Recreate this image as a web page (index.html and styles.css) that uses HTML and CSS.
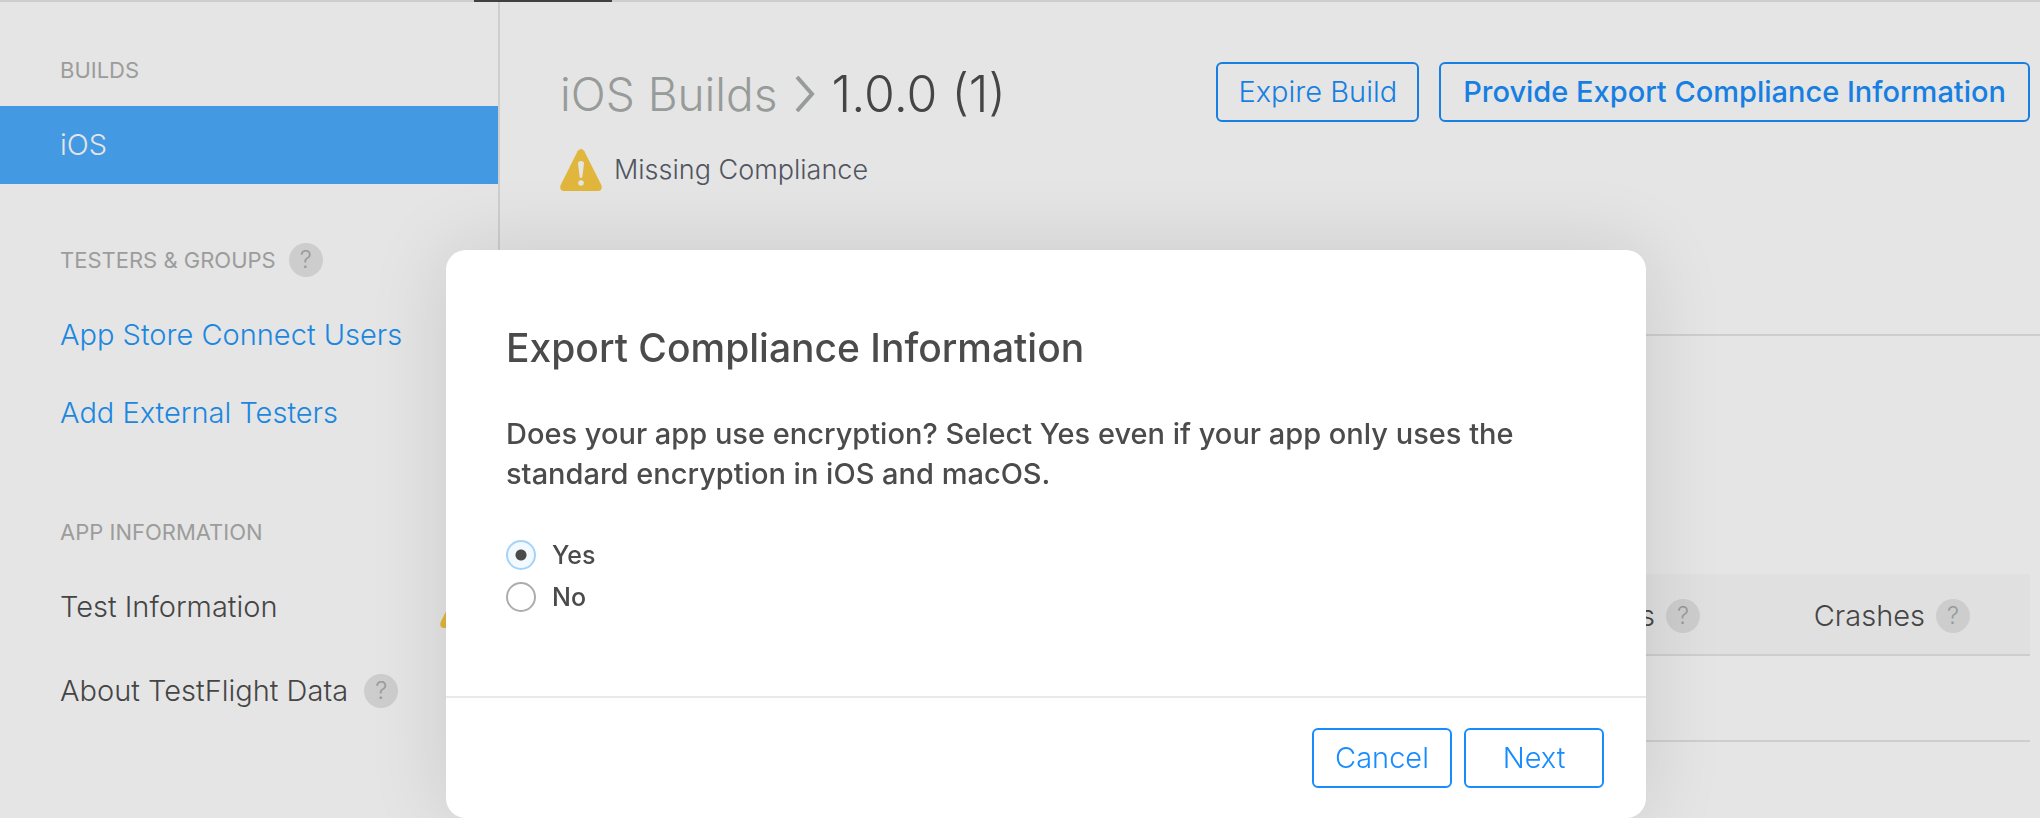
FILE: index.html
```html
<!DOCTYPE html>
<html lang="en">
<head>
<meta charset="utf-8">
<meta name="viewport" content="width=device-width, initial-scale=1">
<title>TestFlight</title>
<link rel="stylesheet" href="styles.css">
</head>
<body>
<svg class="defs" aria-hidden="true">
  <symbol id="warning" viewBox="0 0 42 42">
    <path fill="#e1b63c" d="M17.6 2.2Q21-2 24.4 2.2L41.3 36Q43 41.500 38 42H4Q-1 41.500.7 36Z"/>
    <path fill="#e5e5e5" d="M18 14.500Q18 12 21 12T24 14.500L22.300 28Q21 30 19.700 28Z"/>
    <circle cx="21" cy="34" r="2.800" fill="#e5e5e5"/>
  </symbol>
</svg>
<div class="page">
  <div class="tabs"><span class="tab-marker"></span></div>
  <div class="columns">
    <nav class="sidebar">
      <section class="group">
        <h2 class="group-title">BUILDS</h2>
        <a class="nav-item selected" href="#">iOS</a>
      </section>
      <section class="group">
        <h2 class="group-title">TESTERS &amp; GROUPS <button class="help" type="button">?</button></h2>
        <a class="nav-item link" href="#">App Store Connect Users</a>
        <a class="nav-item link" href="#">Add External Testers</a>
      </section>
      <section class="group app-info">
        <h2 class="group-title">APP INFORMATION</h2>
        <a class="nav-item" href="#">Test Information <svg class="warning"><use href="#warning"/></svg></a>
        <div class="nav-item about">About TestFlight Data <button class="help" type="button">?</button></div>
      </section>
    </nav>
    <main class="main">
      <header class="header">
        <div>
          <h1 class="title">
            <a class="crumb" href="#">iOS Builds</a>
            <svg class="chevron" viewBox="0 0 20 36"><path d="M2 1L17 18L2 35" fill="none" stroke="#979b99" stroke-width="4"/></svg>
            <span>1.0.0 (1)</span>
          </h1>
          <p class="status"><svg class="warning"><use href="#warning"/></svg>Missing Compliance</p>
        </div>
        <div class="actions">
          <button class="button" type="button">Expire Build</button>
          <button class="button strong" type="button">Provide Export Compliance Information</button>
        </div>
      </header>
      <div class="content">
        <table class="builds">
          <colgroup><col><col class="metric"><col class="metric"></colgroup>
          <thead>
            <tr>
              <td></td>
              <th scope="col"><span class="metric-label">Sessions <button class="help" type="button">?</button></span></th>
              <th scope="col"><span class="metric-label">Crashes <button class="help" type="button">?</button></span></th>
            </tr>
          </thead>
          <tbody><tr><td></td><td></td><td></td></tr></tbody>
        </table>
      </div>
    </main>
  </div>
</div>
<div class="overlay">
  <form class="modal" role="dialog" aria-labelledby="modal-title">
    <div class="modal-body">
      <h2 class="modal-title" id="modal-title">Export Compliance Information</h2>
      <fieldset class="question">
        <legend class="question-text">Does your app use encryption? Select Yes even if your app only uses the standard encryption in iOS and macOS.</legend>
        <label class="option"><input class="radio" type="radio" name="encryption" checked>Yes</label>
        <label class="option"><input class="radio" type="radio" name="encryption">No</label>
      </fieldset>
    </div>
    <footer class="modal-footer">
      <button class="button bright" type="button">Cancel</button>
      <button class="button bright" type="button">Next</button>
    </footer>
  </form>
</div>
</body>
</html>
```
FILE: styles.css
```css
* { box-sizing: border-box; }

body {
  margin: 0;
  overflow: hidden;
  background: #e5e5e5;
  color: #454545;
  font: 300 29px/36px Inter, "Liberation Sans", sans-serif;
}

h1, h2, p, fieldset { margin: 0; padding: 0; border: 0; font-weight: inherit; }
a { color: inherit; text-decoration: none; }
button { font: inherit; cursor: pointer; }
.defs { display: none; }

.page { display: flex; flex-direction: column; min-height: 100vh; }
.tabs { height: 2px; padding-left: 474px; background: #cecece; }
.tab-marker { display: block; width: 138px; height: 2px; background: #404040; }
.columns { display: flex; flex: 1; }

.sidebar { flex: none; width: 500px; padding-top: 32px; border-right: 2px solid #cecece; }
.group { margin-bottom: 40px; }
.app-info { margin-top: 44px; }
.group-title {
  display: flex;
  align-items: center;
  gap: 13px;
  height: 72px;
  padding-left: 60px;
  color: #9c9c9c;
  font-size: 22px;
  font-weight: 400;
}
.nav-item {
  display: flex;
  align-items: center;
  height: 78px;
  padding: 0 16px 0 60px;
}
.nav-item .warning { margin-left: auto; }
.selected { background: #4499e3; color: #e5e5e5; }
.link { color: #1b87e0; }
.about { gap: 16px; margin-top: 6px; }

.help {
  flex: none;
  width: 34px;
  height: 34px;
  padding: 0;
  border: 0;
  border-radius: 50%;
  background: #cdcdcd;
  color: #979b99;
  font-size: 24px;
  font-weight: 300;
  line-height: 34px;
}
.warning { flex: none; width: 42px; height: 42px; }

.main { flex: 1; min-width: 0; }
.header {
  display: flex;
  justify-content: space-between;
  height: 334px;
  padding: 60px 10px 0 60px;
  border-bottom: 2px solid #cecece;
}
.title {
  display: flex;
  align-items: center;
  gap: 17px;
  height: 64px;
  font-size: 50px;
  font-weight: 300;
  white-space: nowrap;
}
.crumb { color: #979b99; font-size: 46px; }
.chevron { width: 20px; height: 36px; }
.status {
  display: flex;
  align-items: center;
  gap: 12px;
  margin-top: 23px;
  color: #50555f;
  font-size: 27px;
}
.actions { display: flex; align-items: flex-start; gap: 20px; }
.button {
  min-width: 140px;
  height: 60px;
  padding: 0 20px;
  border: 2px solid #177fe2;
  border-radius: 6px;
  background: transparent;
  color: #177fe2;
  font-size: 29px;
  font-weight: 300;
  white-space: nowrap;
}
.strong { padding: 0 22px; font-weight: 500; }
.bright { border-color: #188cff; color: #188cff; }

.content { padding: 238px 10px 0 60px; }
.builds { width: 100%; border-collapse: collapse; table-layout: fixed; }
.metric { width: 270px; }
.builds th, .builds td { height: 81px; padding: 4px 60px 0 0; border-bottom: 2px solid #cecece; }
.builds tbody td { height: 86px; }
.builds thead { background: #e0e0e0; }
.metric-label { display: flex; align-items: center; justify-content: flex-end; gap: 11px; font-weight: 300; }

.overlay {
  position: fixed;
  inset: 0;
  display: flex;
  justify-content: center;
  align-items: flex-start;
  padding: 250px 0 0 52px;
}
.modal {
  width: 1200px;
  border-radius: 20px;
  background: #fff;
  box-shadow: 0 0 80px rgba(0, 0, 0, .12);
  color: #4b4b4b;
}
.modal-body { padding: 72px 60px 78px; }
.modal-title { font-size: 39px; font-weight: 500; line-height: 52px; }
.question { margin-top: 40px; }
.question-text { padding: 0; margin-bottom: 40px; font-size: 29px; font-weight: 500; line-height: 40px; }
.option {
  display: flex;
  align-items: center;
  gap: 16px;
  height: 42px;
  font-size: 25px;
  font-weight: 500;
}
.radio {
  appearance: none;
  width: 30px;
  height: 30px;
  margin: 0;
  border: 2px solid #adadad;
  border-radius: 50%;
}
.radio:checked {
  border-color: #a5d3f8;
  background: radial-gradient(circle, #4b4b4b 5px, #f2f9ff 6px);
}
.modal-footer {
  display: flex;
  justify-content: flex-end;
  gap: 12px;
  padding: 30px 42px;
  border-top: 2px solid #e9e9e9;
}
```
